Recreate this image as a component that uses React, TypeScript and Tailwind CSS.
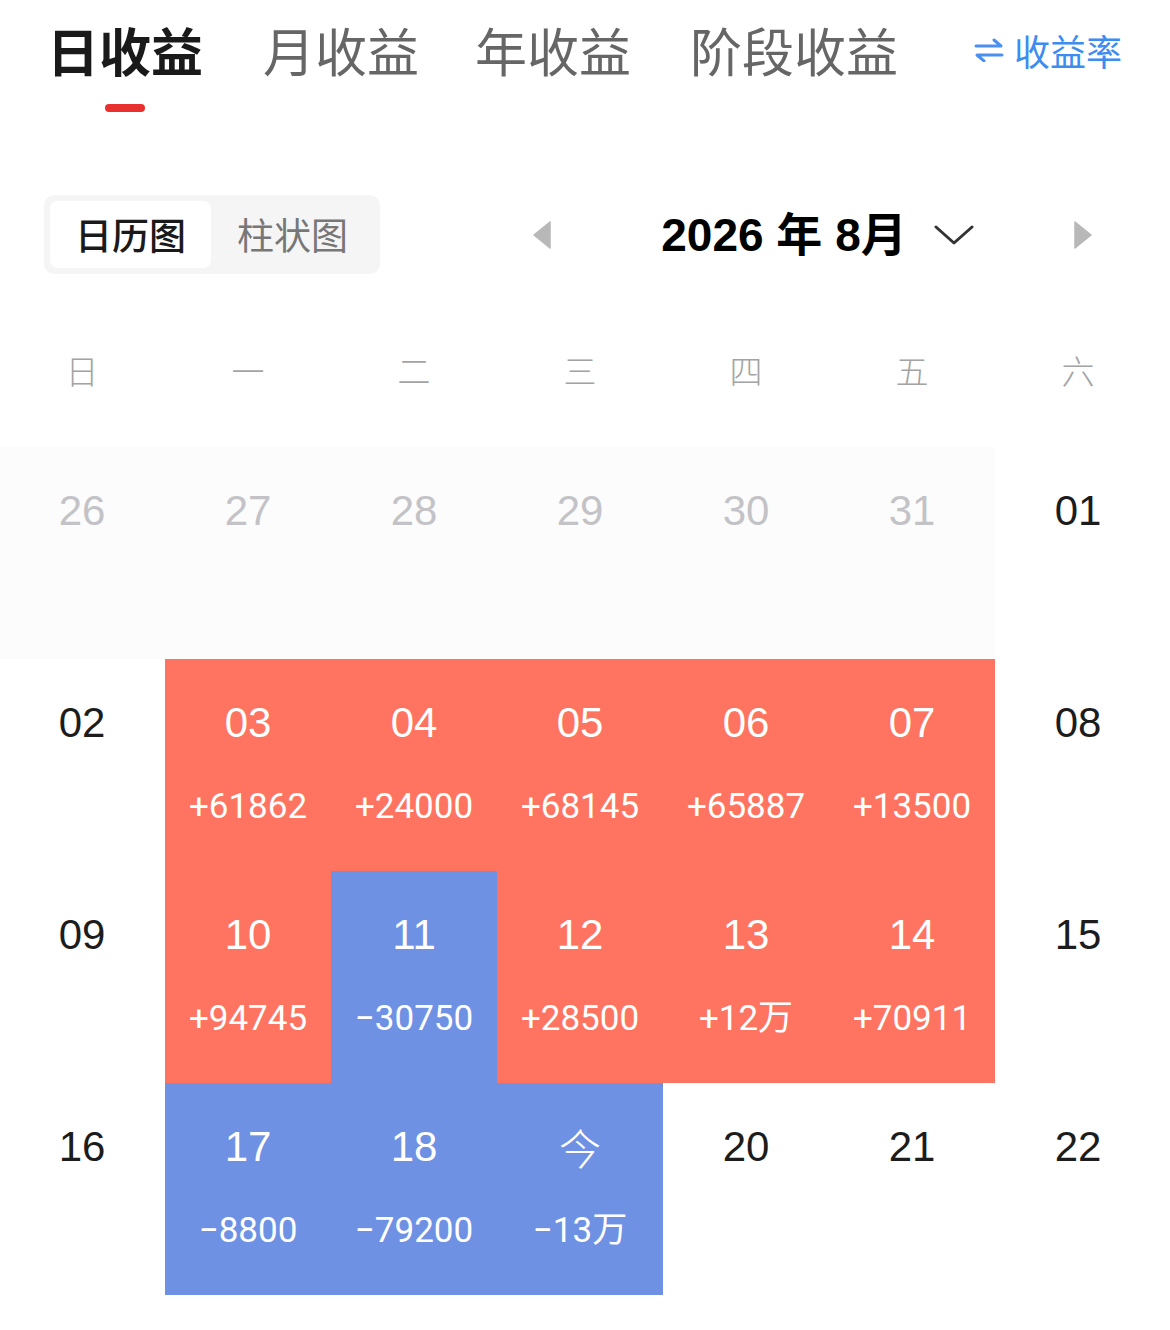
import React from "react";

type Kind = "prev" | "plain" | "up" | "down";
type Cell = { d: string; v?: string; k: Kind };

const cells: Cell[] = [
  { d: "26", k: "prev" },
  { d: "27", k: "prev" },
  { d: "28", k: "prev" },
  { d: "29", k: "prev" },
  { d: "30", k: "prev" },
  { d: "31", k: "prev" },
  { d: "01", k: "plain" },
  { d: "02", k: "plain" },
  { d: "03", v: "+61862", k: "up" },
  { d: "04", v: "+24000", k: "up" },
  { d: "05", v: "+68145", k: "up" },
  { d: "06", v: "+65887", k: "up" },
  { d: "07", v: "+13500", k: "up" },
  { d: "08", k: "plain" },
  { d: "09", k: "plain" },
  { d: "10", v: "+94745", k: "up" },
  { d: "11", v: "−30750", k: "down" },
  { d: "12", v: "+28500", k: "up" },
  { d: "13", v: "+12万", k: "up" },
  { d: "14", v: "+70911", k: "up" },
  { d: "15", k: "plain" },
  { d: "16", k: "plain" },
  { d: "17", v: "−8800", k: "down" },
  { d: "18", v: "−79200", k: "down" },
  { d: "今", v: "−13万", k: "down" },
  { d: "20", k: "plain" },
  { d: "21", k: "plain" },
  { d: "22", k: "plain" },
];

const weekdays = ["日", "一", "二", "三", "四", "五", "六"];

function DayCell({ c }: { c: Cell }) {
  const bg =
    c.k === "up"
      ? "bg-[#ff7460]"
      : c.k === "down"
      ? "bg-[#6f91e4]"
      : c.k === "prev"
      ? "bg-[#fcfcfc]"
      : "bg-white";
  const dateColor =
    c.k === "prev" ? "text-[#c3c3c7]" : c.k === "plain" ? "text-[#1c1c1c]" : "text-white";
  return (
    <div className={`h-[212px] flex flex-col items-center ${bg}`}>
      <div
        className={`mt-[43px] text-[42px] leading-[42px] ${dateColor} ${
          c.d === "今" ? "font-['Noto_Sans_CJK_SC',sans-serif] font-light" : "font-['Liberation_Sans','Noto_Sans_CJK_SC',sans-serif]"
        }`}
      >
        {c.d}
      </div>
      {c.v && (
        <div className="mt-[45px] text-[35px] leading-[35px] text-white font-normal font-['Roboto','Noto_Sans_CJK_SC',sans-serif]">
          {c.v}
        </div>
      )}
    </div>
  );
}

export default function App() {
  return (
    <div className="w-[1170px] h-[1330px] bg-white overflow-hidden font-['Noto_Sans_CJK_SC',sans-serif]">
      {/* Tabs */}
      <div className="flex items-start pl-[47px] pt-[24px]">
        <div className="flex flex-col items-center">
          <div className="text-[52px] leading-[52px] font-bold text-[#1a1a1a]">日收益</div>
          <div className="mt-[28px] w-[40px] h-[8px] rounded-full bg-[#e8302f]" />
        </div>
        <div className="ml-[60px] text-[52px] leading-[52px] text-[#666666]">月收益</div>
        <div className="ml-[56px] text-[52px] leading-[52px] text-[#666666]">年收益</div>
        <div className="ml-[59px] text-[52px] leading-[52px] text-[#666666]">阶段收益</div>
        <div className="ml-auto mr-[48px] h-[52px] flex items-center gap-[10px] text-[#3d8cf0]">
          <svg width="30" height="24" viewBox="0 0 30 24" fill="none">
            <path d="M2 8 H27 L20 2" stroke="#4a90f0" strokeWidth="3" strokeLinecap="round" strokeLinejoin="round" />
            <path d="M28 17 H3 L10 23" stroke="#4a90f0" strokeWidth="3" strokeLinecap="round" strokeLinejoin="round" />
          </svg>
          <span className="text-[36px] leading-[52px]">收益率</span>
        </div>
      </div>

      {/* Toggle + month nav */}
      <div className="mt-[83px] flex items-center h-[79px]">
        <div className="ml-[44px] w-[336px] h-[79px] rounded-[10px] bg-[#f5f5f5] p-[6px] flex">
          <div className="w-[161px] h-full bg-white rounded-[8px] flex items-center justify-center text-[37px] font-medium text-[#1a1a1a]">
            日历图
          </div>
          <div className="flex-1 flex items-center justify-center text-[37px] text-[#777777]">柱状图</div>
        </div>
        <div className="ml-[153px] w-[559px] flex items-center justify-between">
          <svg width="18" height="28" viewBox="0 0 18 28">
            <polygon points="17,1 17,27 1,14" fill="#b8b8b8" stroke="#b8b8b8" strokeWidth="1.5" strokeLinejoin="round" />
          </svg>
          <div className="pl-[10px] flex items-center">
            <span className="text-[46px] leading-[50px] font-bold text-black font-['Liberation_Sans','Noto_Sans_CJK_SC',sans-serif]">
              2026 年 8月
            </span>
            <svg className="ml-[27px]" width="40" height="22" viewBox="0 0 40 22" fill="none">
              <polyline points="2,3 20,19 38,3" stroke="#333333" strokeWidth="3" strokeLinecap="round" strokeLinejoin="round" />
            </svg>
          </div>
          <svg width="18" height="28" viewBox="0 0 18 28">
            <polygon points="1,1 1,27 17,14" fill="#b8b8b8" stroke="#b8b8b8" strokeWidth="1.5" strokeLinejoin="round" />
          </svg>
        </div>
      </div>

      {/* Weekdays */}
      <div className="ml-[-1px] w-[1162px] grid grid-cols-7 pt-[56px] pb-[35px]">
        {weekdays.map((w) => (
          <div key={w} className="h-[82px] flex items-center justify-center text-[33px] font-light text-[#a3a3a3]">
            {w}
          </div>
        ))}
      </div>

      {/* Calendar grid */}
      <div className="ml-[-1px] w-[1162px] grid grid-cols-7">
        {cells.map((c, i) => (
          <DayCell key={i} c={c} />
        ))}
      </div>
    </div>
  );
}
